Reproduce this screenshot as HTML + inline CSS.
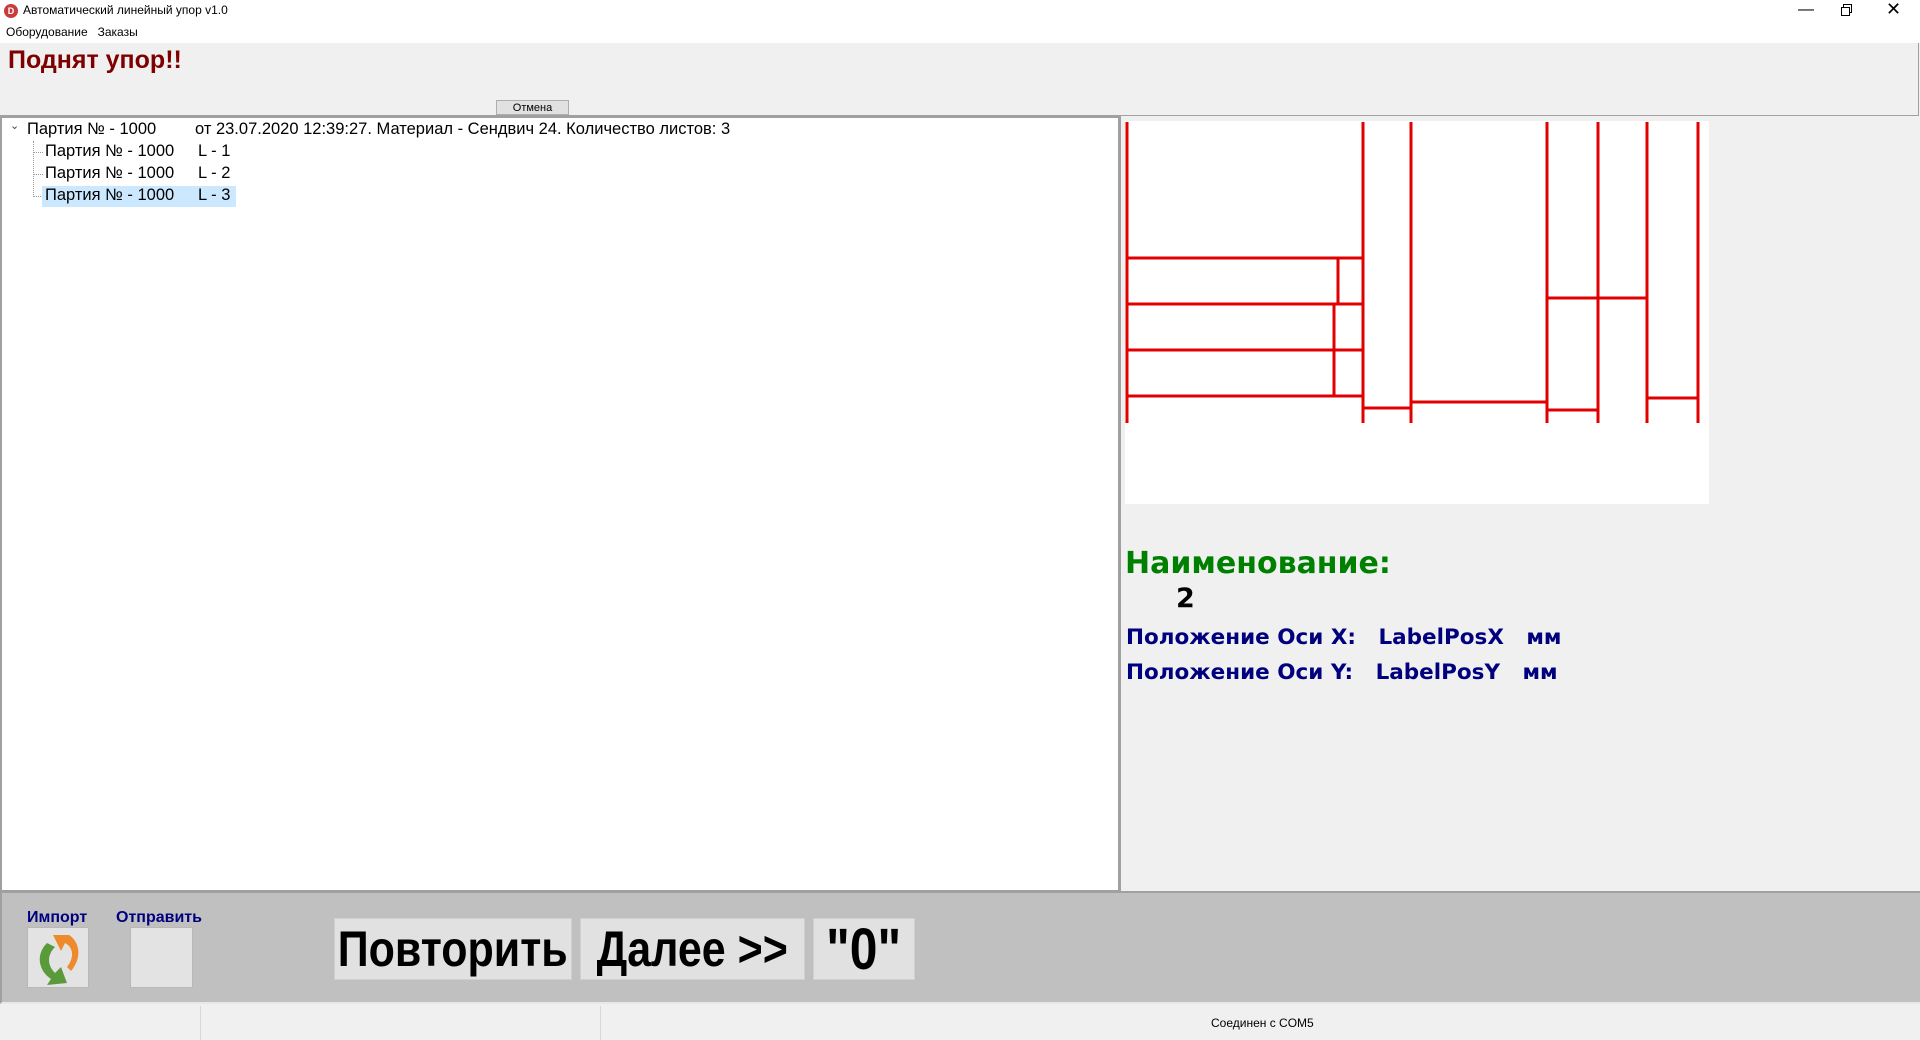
<!DOCTYPE html>
<html><head><meta charset="utf-8"><style>
*{margin:0;padding:0;box-sizing:border-box}
body{width:1920px;height:1040px;background:#f0f0f0;position:relative;overflow:hidden;font-family:"Liberation Sans","DejaVu Sans",sans-serif}
.a{position:absolute;white-space:nowrap}
.tree{font-family:"Liberation Sans","DejaVu Sans",sans-serif;font-size:16.5px;color:#000}
.btn{position:absolute;background:#e1e1e1;border:1px solid #d0d0d0;font-family:"Liberation Sans",sans-serif;font-weight:bold;font-size:50px;color:#000;display:flex;align-items:center;justify-content:center}
.btn span{display:inline-block;transform:scaleX(0.86)}
.lbl{font-family:"DejaVu Sans",Verdana,sans-serif;font-weight:bold;color:#00007f}
</style></head><body>
<div class="a" style="left:0;top:0;width:1920px;height:43px;background:#fff"></div>
<div class="a" style="left:4px;top:4px;width:14px;height:14px;border-radius:50%;background:#c83c3c;color:#fff;font-size:9px;font-weight:bold;text-align:center;line-height:14px">D</div>
<div class="a" style="left:23px;top:3px;font-size:12px;color:#000">Автоматический линейный упор v1.0</div>
<div class="a" style="left:1798px;top:1px;font-size:16px">&#8212;</div>
<div class="a" style="left:1843px;top:4px;width:9px;height:9px;border:1px solid #000;background:#fff"></div>
<div class="a" style="left:1841px;top:7px;width:9px;height:9px;border:1px solid #000;background:#fff"></div>
<div class="a" style="left:1886px;top:-1px;font-size:18px">&#10005;</div>
<div class="a" style="left:6px;top:25px;font-size:12px">Оборудование&nbsp;&nbsp;&nbsp;Заказы</div>
<div class="a" style="left:0;top:43px;width:1919px;height:73px;background:#f0f0f0;border-right:1px solid #a0a0a0;border-bottom:1px solid #a0a0a0"></div>
<div class="a" style="left:8px;top:46px;font-size:25px;font-weight:bold;color:#7f0000">Поднят упор!!</div>
<div class="a" style="left:496px;top:100px;width:73px;height:15px;background:#e1e1e1;border:1px solid #adadad;font-size:11px;text-align:center;line-height:14px">Отмена</div>
<div class="a" style="left:0;top:116px;width:1120px;height:776px;background:#fff;border:2px solid #a0a0a0"></div>
<div class="a tree" style="left:10px;top:119px;font-size:11px;color:#444">&#8964;</div>
<div class="a tree" style="left:27px;top:120px">Партия № - 1000</div>
<div class="a tree" style="left:195px;top:120px">от 23.07.2020 12:39:27. Материал - Сендвич 24. Количество листов: 3</div>
<div class="a" style="left:33px;top:141px;height:56px;border-left:1px dotted #999"></div>
<div class="a" style="left:33px;top:152px;width:10px;border-top:1px dotted #999"></div>
<div class="a" style="left:33px;top:174px;width:10px;border-top:1px dotted #999"></div>
<div class="a" style="left:33px;top:196px;width:10px;border-top:1px dotted #999"></div>
<div class="a" style="left:42px;top:186px;width:194px;height:21px;background:#cce8ff"></div>
<div class="a tree" style="left:45px;top:142px">Партия № - 1000</div><div class="a tree" style="left:198px;top:142px">L - 1</div>
<div class="a tree" style="left:45px;top:164px">Партия № - 1000</div><div class="a tree" style="left:198px;top:164px">L - 2</div>
<div class="a tree" style="left:45px;top:186px">Партия № - 1000</div><div class="a tree" style="left:198px;top:186px">L - 3</div>
<div class="a" style="left:1119px;top:116px;width:2px;height:776px;background:#a0a0a0"></div>
<div class="a" style="left:1125px;top:121px;width:584px;height:383px;background:#fff"></div>
<svg class="a" style="left:0;top:0" width="1920" height="1040" stroke="#e00000" stroke-width="3" fill="none">
<path d="M1127 122V423M1363 122V423M1411 122V423M1547 122V423M1598 122V423M1647 122V423M1698 122V423"/>
<path d="M1127 258H1363M1127 304H1363M1127 350H1363M1127 396H1363M1338 258V304M1334 304V396"/>
<path d="M1363 408H1411M1411 402H1547M1547 298H1647M1547 410H1598M1647 398H1698"/>
</svg>
<div class="a lbl" style="left:1125px;top:546px;font-size:30px;color:#008000">Наименование:</div>
<div class="a lbl" style="left:1176px;top:583px;font-size:27px;color:#000">2</div>
<div class="a lbl" style="left:1126px;top:625px;font-size:21.5px">Положение Оси X:&nbsp;&nbsp;&nbsp;LabelPosX&nbsp;&nbsp;&nbsp;мм</div>
<div class="a lbl" style="left:1126px;top:660px;font-size:21.5px">Положение Оси Y:&nbsp;&nbsp;&nbsp;LabelPosY&nbsp;&nbsp;&nbsp;мм</div>
<div class="a" style="left:0;top:891px;width:1920px;height:113px;background:#c0c0c0;border-top:2px solid #a0a0a0;border-left:2px solid #a0a0a0;border-bottom:2px solid #e8e8e8"></div>
<div class="a" style="left:27px;top:909px;font-size:16px;font-weight:bold;color:#00007f">Импорт</div>
<div class="a" style="left:116px;top:909px;font-size:16px;font-weight:bold;color:#00007f">Отправить</div>
<div class="a" style="left:27px;top:927px;width:62px;height:61px;background:#e3e3e3;border:1px solid #b8b8b8"></div>
<svg class="a" style="left:27px;top:927px" width="62" height="61">
<path d="M42 8 C52 14 56 30 44 44 L40 40 C48 30 46 20 38 16 L34 24 L26 8 Z" fill="#ee8a2c"/>
<path d="M20 16 C8 28 12 44 24 52 L20 58 L40 56 L34 40 L28 46 C20 38 20 28 28 20 Z" fill="#5a9a3a"/>
</svg>
<div class="a" style="left:130px;top:927px;width:63px;height:61px;background:#e3e3e3;border:1px solid #b8b8b8"></div>
<div class="btn" style="left:334px;top:918px;width:238px;height:62px"><span>Повторить</span></div>
<div class="btn" style="left:580px;top:918px;width:225px;height:62px"><span>Далее &gt;&gt;</span></div>
<div class="btn" style="left:813px;top:918px;width:102px;height:62px;font-size:58px"><span>"0"</span></div>
<div class="a" style="left:200px;top:1006px;height:34px;border-left:1px solid #d8d8d8"></div>
<div class="a" style="left:600px;top:1006px;height:34px;border-left:1px solid #d8d8d8"></div>
<div class="a" style="left:1211px;top:1016px;font-size:12px">Соединен с COM5</div>
</body></html>
